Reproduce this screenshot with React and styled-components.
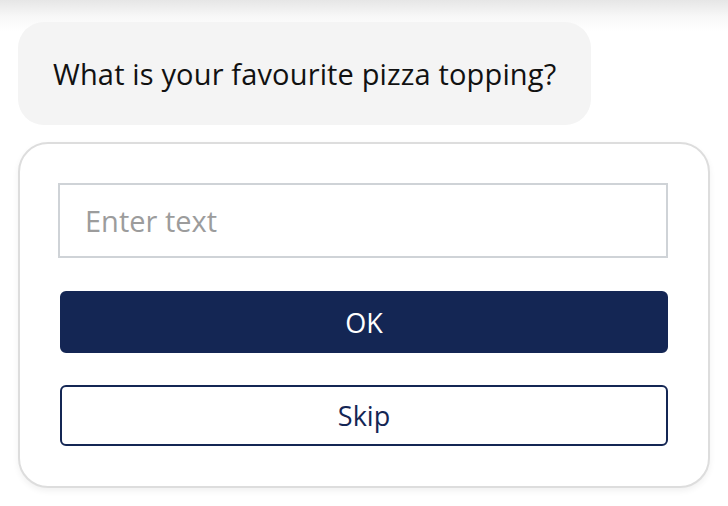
import React from 'react';
import styled, { createGlobalStyle } from 'styled-components';

const GlobalStyle = createGlobalStyle`
  body {
    margin: 0;
    background: #fff;
    font-family: "Open Sans", "Noto Sans", sans-serif;
  }
`;

const Page = styled.div`
  width: 728px;
  height: 506px;
  overflow: hidden;
  display: flex;
  flex-direction: column;
  align-items: flex-start;
  background: linear-gradient(to bottom, #e6e6e6 0px, #f7f7f7 16px, #fff 32px);
  padding: 22px 18px 0 18px;
  box-sizing: border-box;
`;

const Bubble = styled.div`
  background: #f4f4f4;
  border-radius: 26px;
  padding: 0 35px;
  height: 103px;
  display: flex;
  align-items: center;
  font-size: 29px;
  letter-spacing: 0.15px;
  color: #111;
`;

const Card = styled.div`
  margin-top: 17px;
  width: 692px;
  box-sizing: border-box;
  border: 2px solid #dddddd;
  border-radius: 30px;
  padding: 39px 40px 40px 38px;
  background: #fff;
  box-shadow: 0 3px 6px rgba(0, 0, 0, 0.06);
  display: flex;
  flex-direction: column;
`;

const Input = styled.input`
  height: 75px;
  box-sizing: border-box;
  width: 610px;
  border: 2px solid #cfd3d7;
  padding: 0 25px;
  font-family: inherit;
  font-size: 29px;
  color: #222;
  outline: none;
  &::placeholder {
    color: #9c9c9c;
  }
`;

const Button = styled.button`
  margin-left: 2px;
  width: 608px;
  height: ${props => props.$outline ? '61px' : '62px'};
  margin-top: ${props => props.$outline ? '32px' : '33px'};
  box-sizing: border-box;
  border-radius: 6px;
  border: 2px solid #142654;
  background: ${props => props.$outline ? '#fff' : '#142654'};
  color: ${props => props.$outline ? '#142654' : '#fff'};
  font-family: inherit;
  font-size: 27px;
  font-weight: 500;
  cursor: pointer;
`;

export default function App() {
  return (
    <Page>
      <GlobalStyle />
      <Bubble>What is your favourite pizza topping?</Bubble>
      <Card>
        <Input placeholder="Enter text" />
        <Button>OK</Button>
        <Button $outline>Skip</Button>
      </Card>
    </Page>
  );
}
